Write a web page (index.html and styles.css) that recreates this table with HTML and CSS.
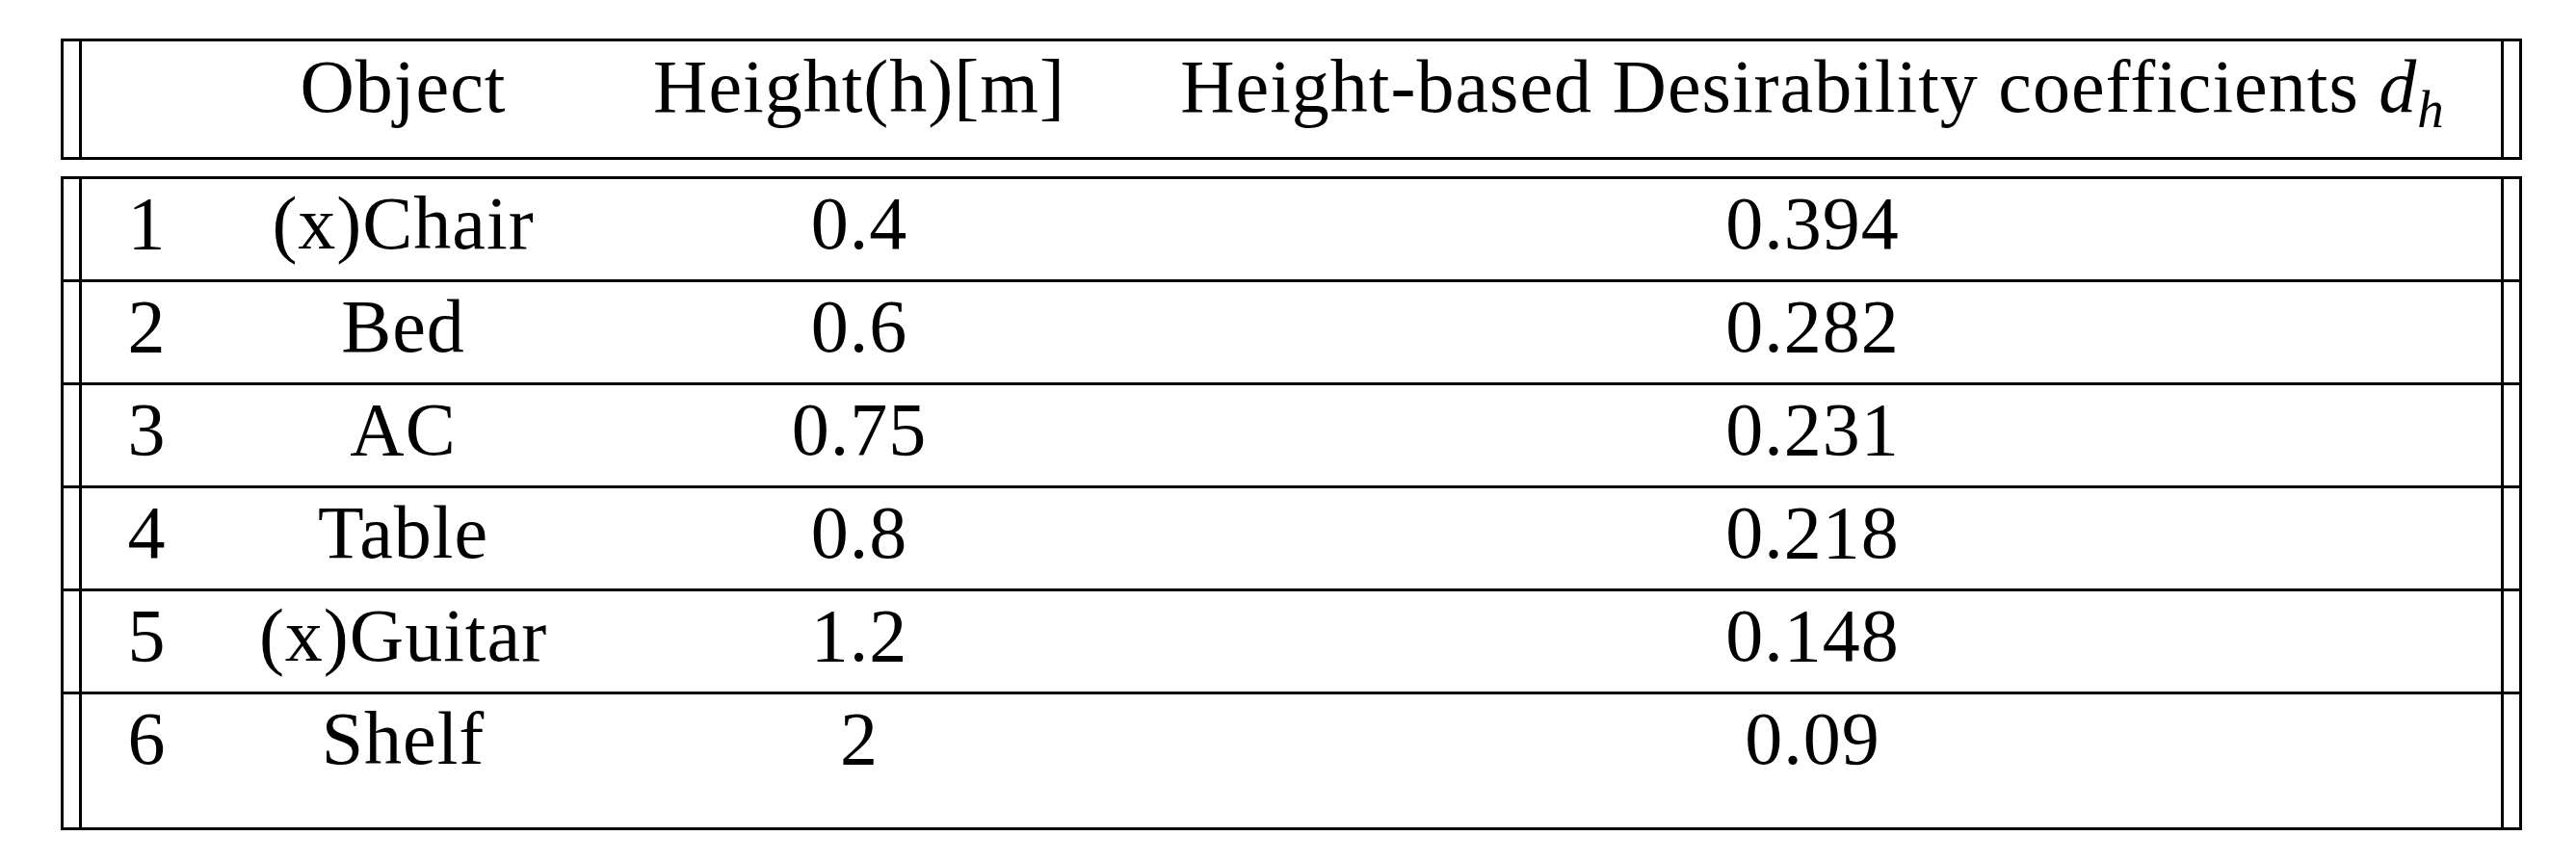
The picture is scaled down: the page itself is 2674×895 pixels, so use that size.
FILE: index.html
```html
<!DOCTYPE html>
<html lang="en">
<head>
<meta charset="utf-8">
<title>Height-based Desirability coefficients</title>
<link rel="stylesheet" href="styles.css">
</head>
<body>
<div class="table">
  <div class="block head">
    <div class="row head-row">
      <div class="cell first"></div>
      <div class="cell">Object</div>
      <div class="cell">Height(h)[m]</div>
      <div class="cell last">Height-based Desirability coefficients <i class="math">d</i><sub class="sub">h</sub></div>
    </div>
  </div>
  <div class="block body">
    <div class="row">
      <div class="cell first">1</div>
      <div class="cell">(x)Chair</div>
      <div class="cell">0.4</div>
      <div class="cell last">0.394</div>
    </div>
    <div class="row">
      <div class="cell first">2</div>
      <div class="cell">Bed</div>
      <div class="cell">0.6</div>
      <div class="cell last">0.282</div>
    </div>
    <div class="row">
      <div class="cell first">3</div>
      <div class="cell">AC</div>
      <div class="cell">0.75</div>
      <div class="cell last">0.231</div>
    </div>
    <div class="row">
      <div class="cell first">4</div>
      <div class="cell">Table</div>
      <div class="cell">0.8</div>
      <div class="cell last">0.218</div>
    </div>
    <div class="row">
      <div class="cell first">5</div>
      <div class="cell">(x)Guitar</div>
      <div class="cell">1.2</div>
      <div class="cell last">0.148</div>
    </div>
    <div class="row last-row">
      <div class="cell first">6</div>
      <div class="cell">Shelf</div>
      <div class="cell">2</div>
      <div class="cell last">0.09</div>
    </div>
  </div>
</div>
</body>
</html>
```

FILE: styles.css
```css
* {
  box-sizing: border-box;
}

html, body {
  margin: 0;
  padding: 0;
  background: #ffffff;
}

body {
  width: 2674px;
  height: 895px;
  overflow: hidden;
  font-family: "Liberation Serif", "Times New Roman", serif;
  font-size: 78px;
  letter-spacing: 1px;
  color: #000000;
}

.table {
  margin: 40px 0 0 63px;
  width: 2555px;
  display: flex;
  flex-direction: column;
  gap: 17px;
}

.block {
  border: 3px solid #000000;
}

.row {
  display: grid;
  grid-template-columns: 138px 397px 550px 1fr;
  padding: 0 16px;
  height: 107px;
  border-bottom: 3px solid #000000;
}

.head-row {
  height: 120px;
  border-bottom: none;
}

.last-row {
  height: 138px;
  border-bottom: none;
}

.cell {
  text-align: center;
  line-height: 88px;
  padding-top: 2px;
  white-space: nowrap;
}

.head-row .cell {
  padding-top: 3px;
}

.cell.first {
  border-left: 3px solid #000000;
}

.cell.last {
  border-right: 3px solid #000000;
}

.math {
  font-style: italic;
}

.sub {
  font-size: 55px;
  font-style: italic;
  line-height: 0;
  vertical-align: -16px;
}
```
